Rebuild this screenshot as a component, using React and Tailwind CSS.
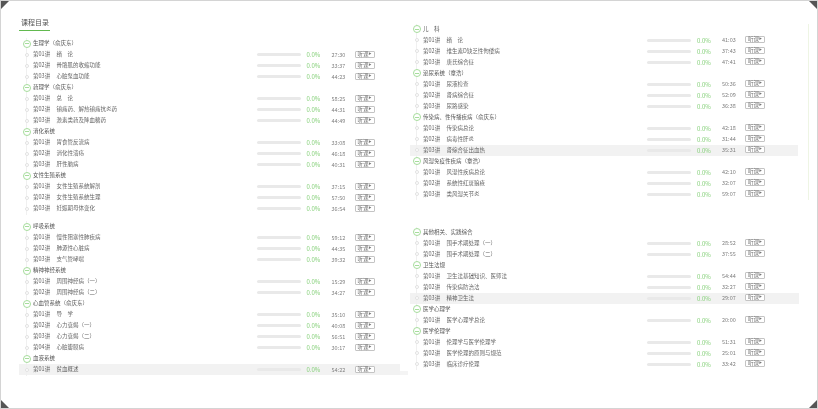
import React from 'react'

const LEFT_TOP = [
  ['生理学（俞庆东）', [['绪　论', '27:30'], ['骨骼肌的收缩功能', '33:37'], ['心脏泵血功能', '44:23']]],
  ['药理学（俞庆东）', [['总　论', '58:25'], ['镇痛药、解热镇痛抗炎药', '44:31'], ['激素类药及降血糖药', '44:49']]],
  ['消化系统', [['胃食管反流病', '33:08'], ['消化性溃疡', '46:18'], ['肝性脑病', '40:31']]],
  ['女性生殖系统', [['女性生殖系统解剖', '37:15'], ['女性生殖系统生理', '57:50'], ['妊娠期母体变化', '36:54']]],
]

const LEFT_BOTTOM = [
  ['呼吸系统', [['慢性阻塞性肺疾病', '59:12'], ['肺源性心脏病', '44:35'], ['支气管哮喘', '39:32']]],
  ['精神神经系统', [['周围神经病（一）', '15:29'], ['周围神经病（二）', '34:27']]],
  ['心血管系统（俞庆东）', [['导　学', '35:10'], ['心力衰竭（一）', '40:08'], ['心力衰竭（二）', '56:51'], ['心脏瓣膜病', '30:17']]],
  ['血液系统', [['贫血概述', '54:22', true]]],
]

const RIGHT_TOP = [
  ['儿　科', [['绪　论', '41:03'], ['维生素D缺乏性佝偻病', '37:43'], ['唐氏综合征', '47:41']]],
  ['泌尿系统（章浩）', [['尿液检查', '50:36'], ['肾病综合征', '52:09'], ['尿路感染', '36:38']]],
  ['传染病、性传播疾病（俞庆东）', [['传染病总论', '42:18'], ['病毒性肝炎', '31:44'], ['肾综合征出血热', '35:31', true]]],
  ['风湿免疫性疾病（章浩）', [['风湿性疾病总论', '42:10'], ['系统性红斑狼疮', '32:07'], ['类风湿关节炎', '59:07']]],
]

const RIGHT_BOTTOM = [
  ['其他相关、实践综合', [['围手术期处理（一）', '28:52'], ['围手术期处理（二）', '37:55']]],
  ['卫生法规', [['卫生法基础知识、医师法', '54:44'], ['传染病防治法', '32:27'], ['精神卫生法', '29:07', true]]],
  ['医学心理学', [['医学心理学总论', '20:00']]],
  ['医学伦理学', [['伦理学与医学伦理学', '51:31'], ['医学伦理的原则与规范', '25:01'], ['临床诊疗伦理', '33:42']]],
]

const TreeLine = ({ narrow }) => (
  <span className={`absolute top-0 bottom-0 w-px bg-[#f0f0f0] ${narrow ? 'left-[6px]' : 'left-[7px]'}`} />
)

const Corner = ({ className, points }) => (
  <svg className={`absolute w-[10px] h-[10px] ${className}`} viewBox="0 0 10 10">
    <polygon points={points} fill="#555" />
  </svg>
)

// narrow = right column, its tree sits 1px closer to the row edge
const Lesson = ({ index, title, time, active, narrow }) => (
  <div
    className={`relative grid items-center h-[11px] ${
      narrow
        ? 'grid-cols-[13px_23.5px_200.5px_44px_6px_25px_23px_20px]'
        : 'grid-cols-[14px_23.5px_200px_44px_6px_25px_23px_20px]'
    } ${active ? 'bg-[#f2f2f2]' : ''}`}
  >
    <span className="relative h-full flex items-center">
      <TreeLine narrow={narrow} />
      <span className={`relative w-1 h-1 rounded-full border border-[#e2e2e2] bg-white ${narrow ? 'ml-[4.5px]' : 'ml-[5.5px]'}`} />
    </span>
    <span className="text-[#666]">第{String(index + 1).padStart(2, '0')}讲</span>
    <span className="text-[#666] whitespace-nowrap">{title}</span>
    <span className="h-[3px] rounded-full bg-[#e9e9e9]" />
    <span />
    <span className="text-[#86d07a] text-[6px]">0.0%</span>
    <span className="text-[#808080] pt-[0.5px]">{time}</span>
    <span className="h-[7px] mb-[1px] border border-[#c4c4c4] rounded-[1px] bg-white text-[#777] flex items-center justify-center leading-none">
      听课<span className="text-[3px]">▶</span>
    </span>
  </div>
)

const Chapter = ({ name, lessons, narrow }) => (
  <div>
    <div className="relative flex items-center h-[11px]">
      <span className={`relative h-full flex items-center ${narrow ? 'w-[13px]' : 'w-[14px]'}`}>
        <TreeLine narrow={narrow} />
        <span className={`relative w-2 h-2 rounded-full border border-[#a6dd9c] bg-white flex items-center justify-center ${narrow ? 'ml-[2.5px]' : 'ml-[3.5px]'}`}>
          <span className="w-1 h-px bg-[#a6dd9c]" />
        </span>
      </span>
      <span className="text-[#555]">{name}</span>
    </div>
    {lessons.map(([title, time, active], i) => (
      <Lesson key={i} index={i} title={title} time={time} active={active} narrow={narrow} />
    ))}
  </div>
)

const Block = ({ chapters, narrow }) => (
  <div>
    {chapters.map(([name, lessons]) => (
      <Chapter key={name} name={name} lessons={lessons} narrow={narrow} />
    ))}
  </div>
)

export default function App() {
  return (
    <div
      className="relative w-[818px] h-[409px] overflow-hidden bg-white border border-[#d4d4d4] text-[5.5px] leading-[11px] blur-[0.4px]"
      style={{ fontFamily: '"Noto Sans CJK SC", "Noto Sans", sans-serif' }}
    >
      <Corner className="-left-px -top-px" points="0,0 10,0 0,10" />
      <Corner className="-right-px -top-px" points="0,0 10,0 10,10" />
      <Corner className="-left-px -bottom-px" points="0,0 10,10 0,10" />
      <Corner className="-right-px -bottom-px" points="10,0 10,10 0,10" />

      <div className="flex">
        <div className="w-[381px] ml-[18px] pt-[15px]">
          <div className="w-[31px] h-[15px] border-b-[1.5px] border-[#62b94f] text-[7px] leading-[13px] text-[#555] pl-[2px]">
            课程目录
          </div>
          <div className="pt-[7px] flex flex-col gap-[7px]">
            <Block chapters={LEFT_TOP} />
            <div className="relative">
              <Block chapters={LEFT_BOTTOM} />
              <span className="absolute right-[-8px] bottom-0 w-2 h-1 bg-[#f4f4f4]" />
            </div>
          </div>
        </div>

        <div className="ml-[10px] w-[399px] pt-[22.5px] flex flex-col gap-[27px]">
          <div className="pr-[10px] border-r border-[#eef5e4]">
            <Block chapters={RIGHT_TOP} narrow />
          </div>
          <div className="pr-[10px]">
            <Block chapters={RIGHT_BOTTOM} narrow />
          </div>
        </div>
      </div>
    </div>
  )
}
